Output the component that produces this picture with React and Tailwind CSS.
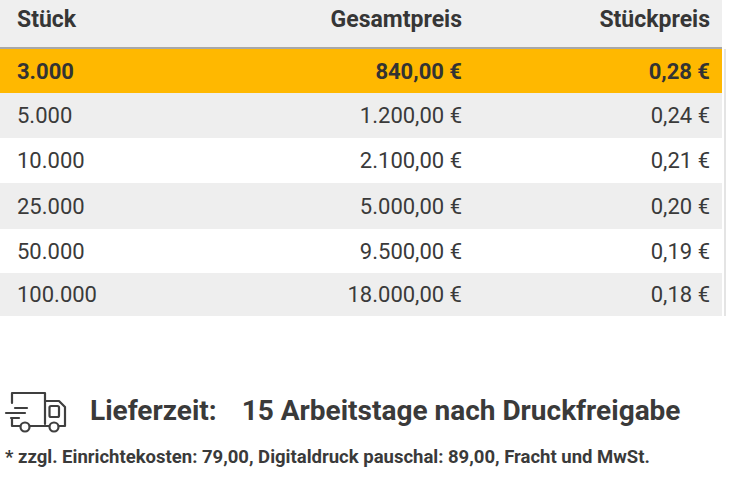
import React from "react"

const rows = [
  { qty: "5.000", total: "1.200,00 €", unit: "0,24 €", h: "h-[45px]" },
  { qty: "10.000", total: "2.100,00 €", unit: "0,21 €", h: "h-[45px]" },
  { qty: "25.000", total: "5.000,00 €", unit: "0,20 €", h: "h-[46px]" },
  { qty: "50.000", total: "9.500,00 €", unit: "0,19 €", h: "h-[44px]" },
  { qty: "100.000", total: "18.000,00 €", unit: "0,18 €", h: "h-[43px]" },
]

const font = { fontFamily: '"Roboto", "Liberation Sans", sans-serif' }

function TruckIcon() {
  return (
    <svg width="66" height="50" viewBox="0 0 66 50" fill="none" stroke="#3f3f3f" strokeWidth="2.2" strokeLinecap="round" strokeLinejoin="round">
      <path d="M10 17 V7 H43 V38" />
      <path d="M43 15 H57 L63 21 V40 H57" />
      <path d="M28 40 H47" />
      <path d="M10 33 V40 H18" />
      <path d="M13 22 H25" />
      <path d="M4 27 H23" />
      <path d="M9 32 H17" />
      <circle cx="23" cy="41" r="4.5" />
      <circle cx="52" cy="41" r="4.5" />
      <rect x="47.5" y="20" width="9.5" height="11" rx="1.5" />
    </svg>
  )
}

function PriceRow({ row, grey }) {
  return (
    <div className={`grid grid-cols-[240px_234px_248px] ${row.h} items-center text-[22px] text-[#3a3a3a] ${grey ? "bg-[#eeeeee]" : "bg-white"}`}>
      <div className="pl-[17px]">{row.qty}</div>
      <div className="text-right pr-[12px]">{row.total}</div>
      <div className="text-right pr-[12px]">{row.unit}</div>
    </div>
  )
}

export default function App() {
  return (
    <div className="w-[730px] h-[487px] bg-white overflow-hidden" style={font}>
      <div className="flex">
        <div className="w-[722px]">
          {/* Header */}
          <div className="grid grid-cols-[240px_234px_248px] h-[49px] items-center bg-[#efefef] border-b-2 border-[#a8a8a8] text-[23px] font-bold text-[#363636]">
            <div className="pl-[17px] pb-[6px]">Stück</div>
            <div className="text-right pr-[12px] pb-[6px]">Gesamtpreis</div>
            <div className="text-right pr-[12px] pb-[6px]">Stückpreis</div>
          </div>

          {/* Selected row */}
          <div className="grid grid-cols-[240px_234px_248px] h-[44px] items-center bg-[#ffb800] text-[22px] font-bold text-[#333]">
            <div className="pl-[17px]">3.000</div>
            <div className="text-right pr-[12px]">840,00 €</div>
            <div className="text-right pr-[12px]">0,28 €</div>
          </div>

          {rows.map((row, i) => (
            <PriceRow key={row.qty} row={row} grey={i % 2 === 0} />
          ))}
        </div>
        <div className="ml-[2px] mt-[49px] w-[2px] h-[267px] bg-[#e4e4e4]" />
      </div>

      {/* Delivery */}
      <div className="flex items-center mt-[70px] pl-[2px]">
        <TruckIcon />
        <div className="ml-[22px] text-[28px] font-bold text-[#3a3a3a] leading-none">Lieferzeit:</div>
        <div className="ml-[25px] text-[28px] font-bold text-[#3a3a3a] leading-none">15 Arbeitstage nach Druckfreigabe</div>
      </div>
      <div className="mt-[12px] pl-[5px] text-[18.5px] font-bold text-[#3a3a3a] leading-none">
        * zzgl. Einrichtekosten: 79,00, Digitaldruck pauschal: 89,00, Fracht und MwSt.
      </div>
    </div>
  )
}
